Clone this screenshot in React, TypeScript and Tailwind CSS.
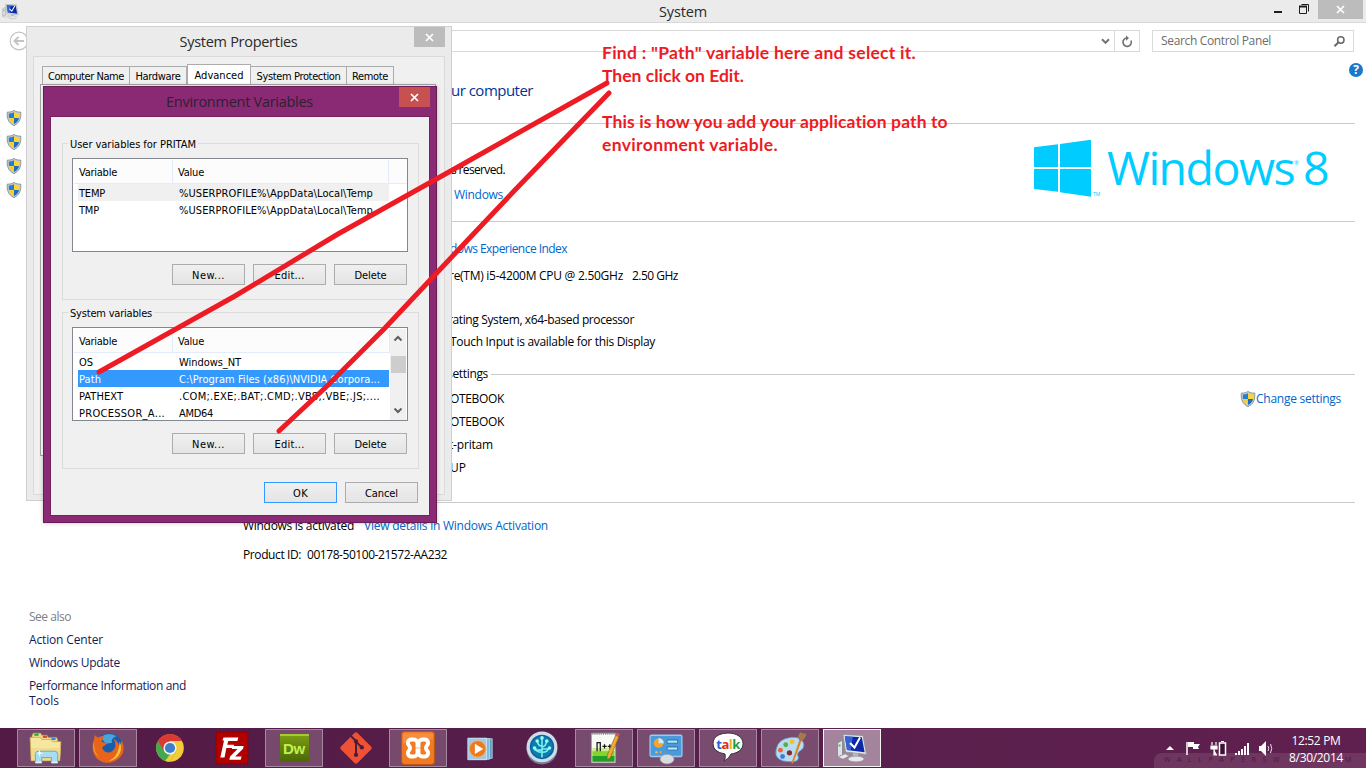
import React, { useLayoutEffect, useRef, useState } from "react";

const UI = "font-['Open_Sans','Noto_Sans',sans-serif]";
const DLG = "font-['DejaVu_Sans_Condensed','DejaVu_Sans','Noto_Sans',sans-serif]";

/* Text run that spreads its letters so the run is exactly w pixels wide. */
function Fit({ w, c = "", children }: { w: number; c?: string; children: string }) {
  const ref = useRef<HTMLSpanElement>(null);
  const [gap, setGap] = useState(0);
  useLayoutEffect(() => {
    if (ref.current) setGap((w - ref.current.getBoundingClientRect().width) / children.length);
  }, [w, children]);
  return (
    <span ref={ref} className={`inline-block shrink-0 whitespace-pre ${c}`} style={{ letterSpacing: `${gap}px` }}>
      {children}
    </span>
  );
}

function Shield() {
  return (
    <svg width="16" height="16" viewBox="0 0 16 16" className="shrink-0">
      <path d="M8 .5C6 1.8 3.800 2.300 1.300 2.100C.700 8 2.300 13 8 15.600C13.700 13 15.300 8 14.700 2.100C12.200 2.300 10 1.800 8 .5Z" fill="#c9ccd0" stroke="#858a90" strokeWidth=".9" />
      <path d="M8 2.300C6.400 3.200 4.700 3.600 2.900 3.600C2.700 5.200 2.700 6.700 3 8H8Z" fill="#1f7fd6" />
      <path d="M8 2.300C9.600 3.200 11.300 3.600 13.100 3.600C13.300 5.200 13.300 6.700 13 8H8Z" fill="#f8d635" />
      <path d="M3 8C3.600 10.800 5.200 12.800 8 14V8Z" fill="#f8cf2a" />
      <path d="M13 8C12.400 10.800 10.800 12.800 8 14V8Z" fill="#1c6cc4" />
    </svg>
  );
}

function Cross({ size = 9, w = 1.7 }: { size?: number; w?: number }) {
  return (
    <svg width={size} height={size} viewBox="0 0 9 9">
      <path d="M1 1L8 8M8 1L1 8" stroke="#fff" strokeWidth={w} />
    </svg>
  );
}

function MonitorIcon({ size }: { size: number }) {
  return (
    <svg width={size} height={size} viewBox="0 0 32 32">
      <path d="M1.500 11l5-3v15l-5 2z" fill="#dfe3e6" stroke="#7c8288" strokeWidth=".8" />
      <path d="M2.500 12.500h2v2h-2z" fill="#46c246" />
      <path d="M2 25l7-3 4 2-6 3z" fill="#e9ecee" stroke="#8b9299" strokeWidth=".5" />
      <path d="M7 2.500l20 1 3.500 19L9.500 20z" fill="#e3e7ea" stroke="#8b9299" strokeWidth=".8" />
      <path d="M8.800 4.300l17 .9 2.800 15L11 18z" fill="#0a28a8" />
      <path d="M8.800 4.300l8 .4-2 13.700L11 18z" fill="#3f70dd" opacity=".8" />
      <path d="M14 11l4.500 4.500L24 5.500" fill="none" stroke="#fff" strokeWidth="2" />
      <path d="M17 21l5 .6 .5 4-6-.6z" fill="#b5babf" />
      <ellipse cx="20" cy="27" rx="8" ry="2.800" fill="#e6e9ec" stroke="#969ca2" strokeWidth=".7" />
    </svg>
  );
}

/* ---------- System window ---------- */

function TitleBar() {
  return (
    <header className="flex h-[23px] items-start border-b border-[#d8d8d8] bg-[#ebebeb]">
      <div className="flex w-[276px] pl-0.5 pt-[3px]"><MonitorIcon size={17} /></div>
      <div className="flex flex-1 justify-center pl-[4px] text-[14.500px] leading-[23px] text-[#2a2a2a]"><Fit w={48}>System</Fit></div>
      <div className="flex w-[280px] justify-end">
        <svg width="36" height="19" viewBox="0 0 36 19">
          <path d="M1 11h8v2H1z" fill="#1e1e1e" />
          <path d="M26.500 6.500h7v7h-7zM28.500 4.500h7v7" fill="none" stroke="#1e1e1e" />
          <path d="M26 6.500h8" stroke="#1e1e1e" strokeWidth="2" />
        </svg>
        <div className="ml-[9px] flex h-[19px] w-[45px] items-center justify-center bg-[#bcbcbc]"><Cross /></div>
        <div className="w-[3px]" />
      </div>
    </header>
  );
}

function NavBar() {
  return (
    <div className="flex h-[37px] items-start pt-[7px]">
      <div className="w-[240px] pl-[9px] pt-px">
        <svg width="20" height="20" viewBox="0 0 20 20" fill="none" stroke="#c4c4c4">
          <circle cx="10" cy="10" r="8.800" strokeWidth="1.200" />
          <path d="M15 10H6M9.500 6L5.500 10l4 4" strokeWidth="2" />
        </svg>
      </div>
      <div className="flex h-[22px] w-[900px] items-center justify-end border border-[#d9d9d9]">
        <svg width="9" height="7" viewBox="0 0 9 7" className="mr-[4px]"><path d="M1 1.200l3.500 3.600L8 1.200" fill="none" stroke="#757575" strokeWidth="2" /></svg>
        <div className="flex h-full w-[25px] items-center justify-center border-l border-[#d9d9d9]">
          <svg width="12" height="13" viewBox="0 0 12 13" fill="none" stroke="#707070" strokeWidth="1.600">
            <path d="M10 5.500A4.200 4.200 0 1 1 6 3" /><path d="M5 .5L8 3 5 5.700z" fill="#707070" stroke="none" />
          </svg>
        </div>
      </div>
      <div className="ml-[12px] flex h-[22px] w-[202px] items-center justify-between border border-[#d9d9d9] pr-[7px] pl-[8px] text-[12px] text-[#6d6d6d]">
        <Fit w={110}>Search Control Panel</Fit>
        <svg width="13" height="13" viewBox="0 0 13 13" fill="none" stroke="#686868"><circle cx="7.800" cy="5" r="3.200" strokeWidth="1.500" /><path d="M5.500 7.300L1.500 11.300" strokeWidth="2" /></svg>
      </div>
    </div>
  );
}

function Sidebar() {
  return (
    <aside className="flex w-[243px] shrink-0 flex-col">
      <div className="flex flex-col gap-2 pt-[50px] pl-[6px]">
        <Shield /><Shield /><Shield /><Shield />
      </div>
      <div className="flex flex-col items-start pt-[411px] pl-[29px] text-[12px] leading-[16px] text-[#151c55]">
        <Fit w={42} c="text-[#808080]">See also</Fit>
        <Fit w={74} c="mt-[7px]">Action Center</Fit>
        <Fit w={91} c="mt-[7px]">Windows Update</Fit>
        <Fit w={157} c="mt-[7px]">Performance Information and</Fit>
        <Fit w={30} c="-mt-px">Tools</Fit>
      </div>
    </aside>
  );
}

function WindowsLogo() {
  return (
    <div className="flex h-[60px] w-[321px] items-start text-[#00ccff]">
      <svg width="58" height="58" viewBox="0 0 58 58" fill="#00ccff">
        <path d="M0 7.300L24 4.200V27H0zM26 4L57 -.3V27H26zM0 29H24V51.700L0 49zM26 29H57V56.700L26 52.300z" />
      </svg>
      <span className="mt-[52px] ml-[1px] w-[8px] text-[5px] leading-[5px]">TM</span>
      <Fit w={187} c="-mt-[7px] ml-[6px] text-[46.500px] leading-[68px]">Windows</Fit>
      <span className="mt-[20px] w-[8px] text-[6px] leading-[6px]">®</span>
      <Fit w={25} c="-mt-[7px] ml-[1px] text-[46.500px] leading-[68px]">8</Fit>
    </div>
  );
}

const Rule = ({ c }: { c: string }) => <div className={`h-px shrink-0 bg-[#cacaca] ${c}`} />;

function Details() {
  return (
    <main className="flex w-[1112px] flex-col text-[12px] leading-[16px] text-black">
      <div className="mt-[18px] flex h-[24px] items-center pl-[208px] text-[15px] text-[#003399]"><Fit w={82}>ur computer</Fit></div>
      <Rule c="mt-[21px]" />
      <div className="flex h-[97px] justify-between">
        <div className="flex flex-col items-start pt-[38px]">
          <Fit w={54} c="ml-[208px]">s reserved.</Fit>
          <Fit w={49} c="mt-[9px] ml-[211px] text-[#0066cc]">Windows</Fit>
        </div>
        <div className="pt-[16px]"><WindowsLogo /></div>
      </div>
      <Rule c="" />
      <Fit w={117} c="mt-[19px] ml-[207px] self-start text-[#0066cc]">dows Experience Index</Fit>
      <div className="mt-[11px] flex gap-[9px] pl-[206px]"><Fit w={174}>re(TM) i5-4200M CPU @ 2.50GHz</Fit><Fit w={46}>2.50 GHz</Fit></div>
      <Fit w={186} c="mt-[28px] ml-[205px] self-start">rating System, x64-based processor</Fit>
      <Fit w={205} c="mt-[6px] ml-[207px] self-start">Touch Input is available for this Display</Fit>
      <div className="mt-[16px] flex items-center pl-[204px]">
        <Fit w={41}>settings</Fit><div className="ml-[3px] h-px flex-1 bg-[#cacaca]" />
      </div>
      <div className="mt-[9px] flex justify-between">
        <Fit w={54} c="ml-[207px]">OTEBOOK</Fit>
        <div className="flex items-center pr-[14px] text-[#0066cc]"><Shield /><Fit w={85}>Change settings</Fit></div>
      </div>
      <Fit w={54} c="mt-[7px] ml-[207px] self-start">OTEBOOK</Fit>
      <Fit w={44} c="mt-[7px] ml-[206px] self-start">t-pritam</Fit>
      <Fit w={16} c="mt-[7px] ml-[207px] self-start">UP</Fit>
      <Rule c="mt-[26px]" />
      <div className="mt-[15px] flex gap-[10px]"><Fit w={111}>Windows is activated</Fit><Fit w={184} c="text-[#0066cc]">View details in Windows Activation</Fit></div>
      <div className="mt-[13px] flex gap-[6px]"><Fit w={58}>Product ID:</Fit><Fit w={140}>00178-50100-21572-AA232</Fit></div>
    </main>
  );
}

/* ---------- Dialogs ---------- */

function SystemProperties() {
  const tab = "flex items-center justify-center border border-b-0 border-[#acacac] pt-[3px]";
  return (
    <section className="absolute top-[26px] left-[26px] h-[475px] w-[426px] border border-[#cfcfcf] bg-[#ebebeb]">
      <div className="flex h-[29px] items-start">
        <div className={`flex flex-1 justify-center pl-[36px] text-[14.500px] leading-[29px] text-[#2a2a2a] ${UI}`}><Fit w={118}>System Properties</Fit></div>
        <div className="mr-[6px] flex h-[20px] w-[31px] items-center justify-center bg-[#bcbcbc]"><Cross /></div>
      </div>
      <div className={`mx-[6px] flex h-[439px] flex-col border border-[#dadada] bg-[#f0f0f0] pt-[7px] text-[11px] leading-[16px] text-black ${DLG}`}>
        <div className="flex h-[20px] items-end pl-[8px]">
          <div className={`${tab} h-[18px] w-[88px]`}><Fit w={76}>Computer Name</Fit></div>
          <div className={`${tab} h-[18px] w-[57px] border-l-0`}><Fit w={45}>Hardware</Fit></div>
          <div className={`${tab} h-[20px] w-[64px] bg-white`}><Fit w={49}>Advanced</Fit></div>
          <div className={`${tab} h-[18px] w-[96px] border-l-0`}><Fit w={84}>System Protection</Fit></div>
          <div className={`${tab} h-[18px] w-[47px] border-l-0`}><Fit w={36}>Remote</Fit></div>
        </div>
        <div className="mr-[8px] ml-[6px] h-[372px] border border-[#a5a5a5] bg-white" />
      </div>
    </section>
  );
}

function Button({ children, w, primary }: { children: string; w: number; primary?: boolean }) {
  return (
    <button className={`flex h-[21px] w-[73px] items-center justify-center border bg-linear-to-b from-[#f0f0f0] to-[#e4e4e4] pt-[2px] ${primary ? "border-[#3399ff]" : "border-[#acacac]"}`}>
      <Fit w={w}>{children}</Fit>
    </button>
  );
}

type Var = { name: string; nw: number; value: string; vw: number; tone?: string };

function VarGroup({ title, tw, rows, scroll }: { title: string; tw: number; rows: Var[]; scroll?: boolean }) {
  return (
    <fieldset className="relative mr-[10px] ml-[11px] h-[157px] border border-[#dcdcdc] px-[9px] pt-[14px]">
      <div className="absolute -top-[8px] left-[5px] h-[16px] bg-[#f0f0f0] px-[2px] pt-px leading-[16px]"><Fit w={tw}>{title}</Fit></div>
      <div className="flex h-[94px] w-[336px] border border-[#828790] bg-white pt-px pl-px">
        <div className="flex flex-1 flex-col overflow-hidden">
          <div className="flex h-[24px] shrink-0 border-b border-[#e3ecfa] bg-[#fcfcfc]">
            <div className="flex w-[99px] items-center border-r border-[#e3ecfa] pt-[3px] pl-[5px]"><Fit w={38}>Variable</Fit></div>
            <div className={`flex items-center pt-[3px] pl-[5px] ${scroll ? "flex-1" : "w-[216px]"} border-r border-[#e3ecfa]`}><Fit w={26}>Value</Fit></div>
          </div>
          {rows.map((r) => (
            <div key={r.name} className={`ml-[4px] flex h-[17px] w-[311px] shrink-0 items-center pt-[3px] pl-px ${r.tone ?? ""}`}>
              <div className="w-[100px]"><Fit w={r.nw}>{r.name}</Fit></div>
              <Fit w={r.vw}>{r.value}</Fit>
            </div>
          ))}
        </div>
        {scroll && (
          <div className="mr-px flex w-[16px] flex-col items-center bg-[#f0f0f0]">
            <svg width="16" height="27" viewBox="0 0 16 27"><path d="M4.500 11.500L8 8l3.500 3.500" fill="none" stroke="#606060" strokeWidth="2" /></svg>
            <div className="h-[17px] w-[15px] bg-[#cdcdcd]" />
            <svg width="16" height="46" viewBox="0 0 16 46"><path d="M4.500 35.500L8 39l3.500-3.500" fill="none" stroke="#606060" strokeWidth="2" /></svg>
          </div>
        )}
      </div>
      <div className="mt-[12px] flex justify-end gap-[8px] pr-[2px]">
        <Button w={33}>New...</Button><Button w={30}>Edit...</Button><Button w={32}>Delete</Button>
      </div>
    </fieldset>
  );
}

const userVars: Var[] = [
  { name: "TEMP", nw: 26, value: "%USERPROFILE%\\AppData\\Local\\Temp", vw: 194, tone: "bg-[#f0f0f0]" },
  { name: "TMP", nw: 20, value: "%USERPROFILE%\\AppData\\Local\\Temp", vw: 194 },
];
const systemVars: Var[] = [
  { name: "OS", nw: 14, value: "Windows_NT", vw: 62 },
  { name: "Path", nw: 22, value: "C:\\Program Files (x86)\\NVIDIA Corpora...", vw: 201, tone: "bg-[#3399ff] text-white" },
  { name: "PATHEXT", nw: 44, value: ".COM;.EXE;.BAT;.CMD;.VBS;.VBE;.JS;....", vw: 201 },
  { name: "PROCESSOR_A...", nw: 86, value: "AMD64", vw: 34 },
];

function EnvironmentVariables() {
  return (
    <section className={`absolute top-[86px] left-[43px] h-[437px] w-[394px] border border-[#6a1c59] bg-[#8b2a74] text-[11px] leading-[16px] text-black shadow-[0_0_4px_rgba(0,0,0,.25)] ${DLG}`}>
      <div className="flex h-[29px] items-start">
        <div className={`flex flex-1 justify-center pl-[36px] text-[14.500px] leading-[29px] text-[#2d2033] ${UI}`}><Fit w={147}>Environment Variables</Fit></div>
        <div className="mr-[6px] flex h-[20px] w-[31px] items-center justify-center bg-[#c75050]"><Cross /></div>
      </div>
      <div className="mx-[6px] flex h-[400px] flex-col border border-[#77205f] bg-[#f0f0f0] pt-[26px]">
        <VarGroup title="User variables for PRITAM" tw={126} rows={userVars} />
        <div className="h-[12px]" />
        <VarGroup title="System variables" tw={82} rows={systemVars} scroll />
        <div className="mt-[13px] flex justify-end gap-[8px] pr-[11px]">
          <Button w={15} primary>OK</Button><Button w={33}>Cancel</Button>
        </div>
      </div>
    </section>
  );
}

function Annotation() {
  return (
    <>
      <div className="absolute top-[41px] left-[602px] flex flex-col items-start font-['Lato',sans-serif] text-[17.500px] leading-[23px] font-bold text-[#ed1c24]">
        <Fit w={314}>Find : "Path" variable here and select it.</Fit>
        <Fit w={142}>Then click on Edit.</Fit>
        <Fit w={346} c="mt-[23px]">This is how you add your application path to</Fit>
        <Fit w={176}>environment variable.</Fit>
      </div>
      <svg className="absolute top-0 left-0" width="1366" height="728" viewBox="0 0 1366 728" fill="none" stroke="#ed1c24" strokeWidth="5" strokeLinecap="round">
        <path d="M607 83L440 177 338 234 235 296 99 372" />
        <path d="M609 93L515 190 463 245 385 328 326 387 279 431" />
      </svg>
    </>
  );
}

/* ---------- Taskbar ---------- */

const Ic = ({ children }: { children: React.ReactNode }) => <svg width="34" height="34" viewBox="0 0 32 32">{children}</svg>;

const Explorer = () => (
  <Ic>
    <path d="M3 4l1-2h7l1 2h5l1 2h8l1 2v3H2z" fill="#eedb8b" stroke="#b99b45" strokeWidth=".6" />
    <path d="M5 2.500h4v2H5z" fill="#1fae38" /><path d="M13 4.500h4v2h-4z" fill="#d94a32" /><path d="M21 6.500h4v2h-4z" fill="#2a8be0" />
    <path d="M1 6h10l1 2h9l1 2h8l-1 18H2z" fill="#f5e6a0" stroke="#c5a850" strokeWidth=".7" />
    <path d="M2 16h28l-1 12H2z" fill="#ecd481" opacity=".6" />
    <path d="M6 30V22q0-3 3-3h15q3 0 3 3v8h-6v-5h-9v5z" fill="#a9dcf2" stroke="#4fa3cb" strokeWidth=".8" />
    <path d="M6 29.500h6M21 29.500h6" stroke="#d9f4ff" strokeWidth="1.500" />
    <path d="M10 17l.6 3.200 3.400.6-3.400.6-.6 3.200-.6-3.200-3.400-.6 3.400-.6z" fill="#fff" />
  </Ic>
);
const Firefox = () => (
  <Ic>
    <circle cx="16.500" cy="15.500" r="13.500" fill="#1c5ba8" />
    <path d="M9 6Q16 0 24 5Q18 7 20 11L14 12Z" fill="#47a5dc" />
    <path d="M3 7q0-2 1-3 1 2 3 2 3-2 6 0-3 1-3 4 2 1 5 1 0 2-3 3-2 1-1 3 2 4 7 3 5-2 5-7 0-3-2-6 5 3 6 8l2-6q4 9-1 15-5 6-13 6Q6 29 3 22 0 15 3 7z" fill="#e8641b" />
    <path d="M27 10q3 7-1 13-4 5-10 5 10-3 11-18z" fill="#fbc23a" />
    <path d="M3 10q-1 9 5 15-6-4-6-11z" fill="#f89c2a" />
  </Ic>
);
const Chrome = () => (
  <Ic>
    <circle cx="16" cy="16" r="13" fill="#f4cb38" />
    <path d="M16 16L4.700 9.500A13 13 0 0 0 16 29l6-10z" fill="#46a84c" />
    <path d="M16 16V9.500H27.300A13 13 0 0 0 4.700 9.500L10.500 19z" fill="#d93a31" />
    <path d="M16 22l-4.500 6q2 1 4.500 1l6-10z" fill="#f4cb38" />
    <circle cx="16" cy="16" r="6.200" fill="#f2f2f2" /><circle cx="16" cy="16" r="4.800" fill="#3e7fcc" />
  </Ic>
);
const FileZilla = () => (
  <Ic>
    <path d="M1 1h30v30H1z" fill="#b10000" stroke="#8d0000" strokeWidth="1.400" strokeDasharray="1.500 1.500" />
    <path d="M8 6h14l-1 3.500H12.500L11.500 13H18l-1 3h-6.300L9 25H5l3.500-16H7z" fill="#fff" />
    <path d="M16 14h11l-.6 2.600L19 24h6l-.8 3H13.500l.7-3 7-7H16z" fill="#fff" />
  </Ic>
);
const Dreamweaver = () => (
  <div className="flex h-[28px] w-[29px] items-center justify-center border-t-2 border-[#a5cc2d] bg-linear-to-b from-[#789b12] to-[#4c6609] font-['Liberation_Sans',sans-serif] text-[15px] font-bold text-[#c2f04d]"><Fit w={22}>Dw</Fit></div>
);
const Git = () => (
  <Ic>
    <rect x="5" y="5" width="22" height="22" rx="2" transform="rotate(45 16 16)" fill="#f05033" />
    <path d="M11 4.500L16 9.500V22M16 10l6 6" stroke="#4a1d38" strokeWidth="1.800" fill="none" />
    <circle cx="16" cy="9.800" r="2" fill="#4a1d38" /><circle cx="16" cy="22.500" r="2" fill="#4a1d38" /><circle cx="21.500" cy="15.500" r="2" fill="#4a1d38" />
  </Ic>
);
const Xampp = () => (
  <Ic>
    <rect x=".5" y=".5" width="31" height="31" rx="3" fill="#f27a22" stroke="#bd5715" />
    <path d="M2 2h28v6Q16 6 2 12z" fill="#f99a50" opacity=".65" />
    <path d="M9.500 8H12a3.500 3.500 0 0 1 3.500 3.500V14h1v-2.500A3.500 3.500 0 0 1 20 8h2.500a3.200 3.200 0 0 1 2 5.500q-2 2.500 0 5a3.200 3.200 0 0 1-2 5.500H20a3.500 3.500 0 0 1-3.500-3.500V18h-1v2.500A3.500 3.500 0 0 1 12 24H9.500a3.200 3.200 0 0 1-2-5.500q2-2.500 0-5a3.200 3.200 0 0 1 2-5.500z" fill="none" stroke="#fff" strokeWidth="3.600" />
  </Ic>
);
const MediaPlayer = () => (
  <svg width="30" height="30" viewBox="0 0 32 32">
    <path d="M9 7l20-1v21l-20 1z" fill="#5f9fc6" stroke="#b9e0f2" strokeWidth=".8" />
    <path d="M6 6h20v22H6z" fill="#7db7d8" stroke="#c6e8f7" strokeWidth=".8" />
    <path d="M3 5.500h20v23H3z" fill="#9fcae1" stroke="#d6eef9" strokeWidth=".8" />
    <circle cx="13.500" cy="17" r="8.800" fill="#ee7a20" stroke="#f9b17a" strokeWidth=".8" />
    <path d="M10.500 11.500v11l9-5.500z" fill="#fff" />
  </svg>
);
const SourceTree = () => (
  <Ic>
    <circle cx="16" cy="17" r="14.500" fill="#6e7f98" /><circle cx="16" cy="15" r="14.500" fill="#d0dbe7" />
    <circle cx="16" cy="15" r="11.500" fill="#0b629e" /><circle cx="16" cy="15" r="10" fill="#087fae" />
    <path d="M16 25V6M16 20q-6 0-6-4M16 20q6 0 6-4M16 14q-4 0-4-4M16 15q4-1 4-5M16 18H9M16 17h6" stroke="#7fecee" strokeWidth="1.500" fill="none" />
    <g fill="#a1f7f3"><circle cx="16" cy="6.500" r="1.700" /><circle cx="11.500" cy="9.500" r="1.700" /><circle cx="20.500" cy="9.500" r="1.700" /><circle cx="9" cy="16" r="1.700" /><circle cx="23" cy="16" r="1.700" /></g>
  </Ic>
);
const NotepadPP = () => (
  <Ic>
    <path d="M4 2h23v28H4z" fill="#f8faf6" stroke="#777" strokeWidth=".6" />
    <path d="M5 2.500h21" stroke="#888" strokeWidth="2" strokeDasharray="1 1" />
    <path d="M5 16h21v4H5z" fill="#c9ee90" /><path d="M5 19h21v5H5z" fill="#83d42c" /><path d="M5 23.500h21V29H5z" fill="#1f9f28" />
    <path d="M9.500 19v-8h3v8M16.500 12.500v4M14.500 14.500h4M21.500 12.500v4M19.500 14.500h4" stroke="#171717" strokeWidth="1.200" fill="none" />
    <path d="M27 4l3 1.500L22 25l-3 2v-4z" fill="#edad38" stroke="#8e5c14" strokeWidth=".6" /><path d="M27 4l1-2.500 3 1.500-1 2.500z" fill="#d25a50" />
  </Ic>
);
const ControlPanel = () => (
  <Ic>
    <rect x="1" y="4" width="30" height="20" rx="1.500" fill="#4a9bd9" stroke="#94cdf3" strokeWidth="1.200" />
    <circle cx="9" cy="11.500" r="4.500" fill="#f7a32f" /><path d="M9 11.500V6.500a5 5 0 0 1 5 5z" fill="#cfe8fa" />
    <path d="M17 8.500h10v3H17zM17 15h10v3H17z" fill="#b7e0fa" stroke="#1c6aa8" strokeWidth=".8" />
    <circle cx="7" cy="20" r="1.200" fill="#ffb040" /><circle cx="11" cy="20" r="1.200" fill="#ff8c40" />
    <ellipse cx="17" cy="26.500" rx="6.500" ry="4.500" fill="#d9dcdf" stroke="#9aa0a5" strokeWidth=".6" />
  </Ic>
);
const Talk = () => (
  <div className="relative flex h-[34px] w-[34px] justify-center pt-[3px] font-['Open_Sans',sans-serif] text-[13px] leading-[20px] font-bold">
    <svg className="absolute inset-0" width="34" height="34" viewBox="0 0 34 34"><path d="M17 2C26 2 32 6.500 32 12.800 32 18.500 27 22 20 23q-2 5-7 7 2-3 1-7Q2 21 2 12.800 2 6.500 8 3.800 12 2 17 2z" fill="#fff" stroke="#333" /></svg>
    <span className="relative flex tracking-[-0.500px]"><span className="text-[#2464d8]">t</span><span className="text-[#df2b2b]">a</span><span className="text-[#efb01a]">l</span><span className="text-[#1d9e3b]">k</span></span>
  </div>
);
const Paint = () => (
  <Ic>
    <path d="M3 17Q5 7 17 6q11-1 12 7 0 4-4 6-3 2-1 6 0 4-7 4Q0 29 3 17z" fill="#b9dcf2" stroke="#5c9cc9" strokeWidth=".8" />
    <circle cx="12" cy="13" r="2.300" fill="#5cae45" /><circle cx="18" cy="10" r="2.300" fill="#f0c22b" /><circle cx="7" cy="18" r="2.300" fill="#e6673b" /><circle cx="9" cy="24" r="2.300" fill="#3d7fd0" /><circle cx="15.500" cy="20.500" r="2.500" fill="#8c2c34" />
    <path d="M25 8l2 .8L19 30l-1.500 1.500 .3-2.500z" fill="#dd8224" /><path d="M25 9q-3-4 1-8 1.500 2 5 1 1 4-4 7.500z" fill="#a5794c" />
  </Ic>
);

const open = "bg-white/20 border-white/35";
const idle = "border-transparent";
const tasks: { icon: React.ReactNode; tone: string }[] = [
  { icon: <Explorer />, tone: open }, { icon: <Firefox />, tone: open },
  { icon: <Chrome />, tone: idle }, { icon: <FileZilla />, tone: idle },
  { icon: <Dreamweaver />, tone: open }, { icon: <Git />, tone: idle },
  { icon: <Xampp />, tone: open }, { icon: <MediaPlayer />, tone: idle },
  { icon: <SourceTree />, tone: idle }, { icon: <NotepadPP />, tone: open },
  { icon: <ControlPanel />, tone: open }, { icon: <Talk />, tone: open },
  { icon: <Paint />, tone: open }, { icon: <MonitorIcon size={32} />, tone: "bg-white/45 border-white/90" },
];

function Taskbar() {
  return (
    <footer className="relative flex h-[40px] items-center overflow-hidden bg-linear-to-r from-[#531a46] via-[#571f4b] to-[#60204f]">
      <div className="absolute top-[25px] right-0 flex h-[15px] w-[212px] items-center justify-between rounded-tl-lg bg-white/10 pr-[8px] pl-[10px] text-[7px] text-[#4c1b40]"><Fit w={122}>WALLPAPERSW</Fit><Fit w={13}>M</Fit></div>
      <div className="flex gap-[4px] pl-[17px]">
        {tasks.map((t, i) => (
          <div key={i} className={`flex h-[38px] w-[58px] items-center justify-center border ${t.tone}`}>{t.icon}</div>
        ))}
      </div>
      <div className="relative ml-auto flex items-center">
        <svg width="110" height="20" viewBox="0 0 110 20" className="mr-[13px]">
          <path d="M1 12h8L5 8z" fill="#fff" />
          <path d="M22 4v13" stroke="#fff" strokeWidth="1.500" /><path d="M23 4h6v2h6l-2 3 1 2h-6V9h-5z" fill="#fff" />
          <path d="M47 4v3M51 4v3M46 8h6v3h-6zM49 11v6h3" stroke="#fff" fill="#fff" strokeWidth="1.200" />
          <path d="M54.500 5h6v12h-6z" fill="#3b1232" stroke="#fff" strokeWidth="1.500" /><path d="M56 3.500h3" stroke="#fff" />
          <path d="M70 15h2v2h-2zM73 13h2v4h-2zM76 11h2v6h-2zM79 8h2v9h-2zM82 5h2v12h-2z" fill="#fff" />
          <path d="M94 8h2l5-5v15l-5-5h-2z" fill="#fff" /><path d="M103 8q1.500 2.500 0 5M105.500 6q2.500 4.500 0 9" stroke="#e8dbe5" fill="none" />
        </svg>
        <div className="mr-[22px] flex w-[56px] flex-col items-center pt-[2px] text-[12px] leading-[17px] text-white"><Fit w={49}>12:52 PM</Fit><Fit w={54}>8/30/2014</Fit></div>
      </div>
    </footer>
  );
}

export default function App() {
  return (
    <div className={`relative flex h-[768px] w-[1366px] flex-col overflow-hidden bg-white ${UI}`}>
      <TitleBar />
      <NavBar />
      <div className="flex flex-1 overflow-hidden">
        <Sidebar />
        <Details />
        <div className="ml-[-6px] pt-[3px]">
          <div className="flex h-[14px] w-[14px] items-center justify-center rounded-full bg-[#1979ca] text-[12px] leading-none font-bold text-white">?</div>
        </div>
      </div>
      <Taskbar />
      <SystemProperties />
      <EnvironmentVariables />
      <Annotation />
    </div>
  );
}
